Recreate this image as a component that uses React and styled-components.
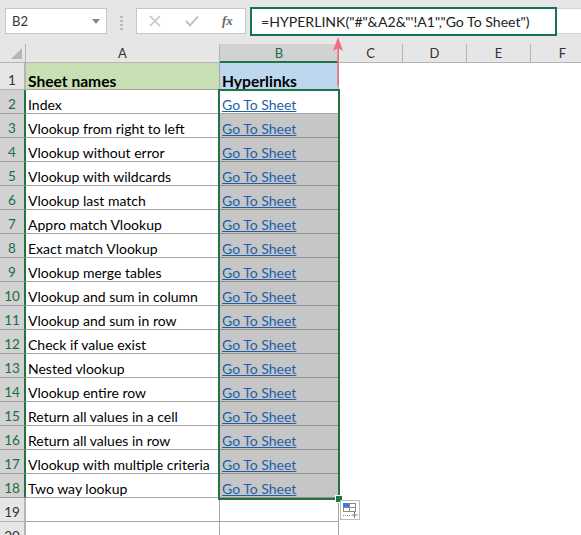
import React from 'react'
import styled, { createGlobalStyle } from 'styled-components'

const GlobalStyle = createGlobalStyle`
  html, body {
    margin: 0;
    padding: 0;
    background: #ffffff;
    overflow: hidden;
  }
`
const Sheet = styled.div`
  position: relative;
  width: 581px;
  height: 535px;
  overflow: hidden;
  font-family: Lato, "Liberation Sans", sans-serif;
  color: #000000;
`
const FormulaBar = styled.div`
  display: flex;
  align-items: flex-start;
  height: 44px;
  box-sizing: border-box;
  padding: 8px 0 0 5px;
  background: #e6e6e6;
`
const NameBox = styled.div`
  display: flex;
  align-items: center;
  justify-content: space-between;
  flex-shrink: 0;
  box-sizing: border-box;
  width: 102px;
  height: 26px;
  padding: 0 6px;
  background: #ffffff;
  border: 1px solid #c6c6c6;
  font-size: 13px;
  color: #333333;
`
const Caret = styled.span`
  width: 0;
  height: 0;
  border-left: 4px solid transparent;
  border-right: 4px solid transparent;
  border-top: 5px solid #8a8a8a;
`
const Dots = styled.div`
  display: flex;
  flex-direction: column;
  flex-shrink: 0;
  gap: 2px;
  width: 3px;
  margin: 8px 13px 0 13px;
  span {
    width: 3px;
    height: 2px;
    background: #b8b8b8;
  }
`
const FxBox = styled.div`
  display: flex;
  align-items: center;
  flex-shrink: 0;
  box-sizing: border-box;
  width: 110px;
  height: 26px;
  padding: 0 12px;
  gap: 24px;
  background: #ffffff;
  border: 1px solid #c6c6c6;
`
const FxLabel = styled.span`
  margin-left: -1px;
  font-family: "Liberation Serif", serif;
  font-style: italic;
  font-weight: bold;
  font-size: 13px;
  color: #666666;
`
const FormulaInput = styled.div`
  display: flex;
  align-items: center;
  flex-shrink: 0;
  box-sizing: border-box;
  width: 307px;
  height: 29px;
  margin: -1px 0 0 4px;
  padding-left: 9px;
  background: #ffffff;
  border: 2px solid #14705f;
  font-size: 14.1px;
  white-space: nowrap;
  color: #222222;
`
const FormulaRest = styled.div`
  flex: 1;
  height: 26px;
  box-sizing: border-box;
  background: #ffffff;
  border-top: 1px solid #d4d4d4;
  border-bottom: 1px solid #d4d4d4;
`
const Row = styled.div`
  display: flex;
  height: ${p => p.$height || 24}px;
`
const Corner = styled.div`
  position: relative;
  flex-shrink: 0;
  box-sizing: border-box;
  width: 26px;
  background: #e6e6e6;
  border-right: 1px solid #b4b4b4;
  border-bottom: 1px solid #b4b4b4;
  &::after {
    content: "";
    position: absolute;
    right: 3px;
    bottom: 3px;
    border-left: 11px solid transparent;
    border-bottom: 11px solid #b5b5b5;
  }
`
const ColumnHead = styled.div`
  display: flex;
  align-items: center;
  justify-content: center;
  flex-shrink: 0;
  box-sizing: border-box;
  width: ${p => p.$width}px;
  font-size: 13px;
  color: ${p => (p.$active ? '#1f6a45' : '#333333')};
  background: ${p => (p.$active ? '#d2d2d2' : '#e6e6e6')};
  border-right: 1px solid ${p => (p.$active ? '#9e9e9e' : '#b4b4b4')};
  border-bottom: ${p => (p.$active ? '2px solid #217346' : '1px solid #b4b4b4')};
`
const RowHead = styled.div`
  display: flex;
  align-items: flex-end;
  justify-content: center;
  flex-shrink: 0;
  box-sizing: border-box;
  width: 26px;
  padding-bottom: 1px;
  font-size: 13.5px;
  color: ${p => (p.$active ? '#1f6a45' : '#333333')};
  background: ${p => (p.$active ? '#d2d2d2' : '#e6e6e6')};
  border-bottom: 1px solid ${p => (p.$active ? '#9e9e9e' : '#b4b4b4')};
  border-right: 2px solid ${p => (p.$active ? '#217346' : '#b4b4b4')};
`
const Cell = styled.div`
  display: flex;
  align-items: flex-end;
  flex-shrink: 0;
  box-sizing: border-box;
  width: ${p => p.$width}px;
  padding-left: 2px;
  font-size: ${p => (p.$bold ? 15.6 : 14)}px;
  line-height: 16px;
  white-space: nowrap;
  overflow: ${p => (p.$clip ? 'hidden' : 'visible')};
  font-weight: ${p => (p.$bold ? 'bold' : 'normal')};
  background: ${p => p.$bg || '#ffffff'};
  border-right: 1px solid ${p => p.$line || '#a6a6a6'};
  border-bottom: 1px solid ${p => p.$line || '#a6a6a6'};
`
const SheetLink = styled.span`
  color: #1f5fa8;
  text-decoration: underline;
  font-size: 14px;
`
const Selection = styled.div`
  position: absolute;
  left: 218px;
  top: 89px;
  width: 122px;
  height: 411px;
  box-sizing: border-box;
  border: 2px solid #217346;
`
const FillHandle = styled.div`
  position: absolute;
  left: 335px;
  top: 495px;
  width: 6px;
  height: 6px;
  background: #217346;
  border: 1px solid #ffffff;
`
const PasteOptions = styled.svg`
  position: absolute;
  left: 340px;
  top: 500px;
`
const Arrow = styled.svg`
  position: absolute;
  left: 332px;
  top: 34px;
`

const names = [
  'Index', 'Vlookup from right to left', 'Vlookup without error', 'Vlookup with wildcards',
  'Vlookup last match', 'Appro match Vlookup', 'Exact match Vlookup', 'Vlookup merge tables',
  'Vlookup and sum in column', 'Vlookup and sum in row', 'Check if value exist', 'Nested vlookup',
  'Vlookup entire row', 'Return all values in a cell', 'Return all values in row',
  'Vlookup with multiple criteria', 'Two way lookup',
]
const widths = { A: 194, B: 119, C: 64, D: 64, E: 64, F: 64 }
const restCols = ['C', 'D', 'E', 'F']

const RestCells = () => restCols.map(c => <Cell key={c} $width={widths[c]} $line="#ffffff" />)

export default function App() {
  return (
    <Sheet>
      <GlobalStyle />
      <FormulaBar>
        <NameBox>B2<Caret /></NameBox>
        <Dots><span /><span /><span /><span /></Dots>
        <FxBox>
          <svg width="12" height="12" viewBox="0 0 12 12">
            <path d="M1 1 L11 11 M11 1 L1 11" stroke="#c4c4c4" strokeWidth="1.6" fill="none" />
          </svg>
          <svg width="14" height="12" viewBox="0 0 14 12">
            <path d="M1 6 L5 10.5 L13 1.5" stroke="#c4c4c4" strokeWidth="2" fill="none" />
          </svg>
          <FxLabel>fx</FxLabel>
        </FxBox>
        <FormulaInput>=HYPERLINK("#"&amp;A2&amp;"'!A1","Go To Sheet")</FormulaInput>
        <FormulaRest />
      </FormulaBar>

      <Row $height={19}>
        <Corner />
        <ColumnHead $width={widths.A}>A</ColumnHead>
        <ColumnHead $width={widths.B} $active>B</ColumnHead>
        {restCols.map(c => <ColumnHead key={c} $width={widths[c]}>{c}</ColumnHead>)}
      </Row>

      <Row $height={27}>
        <RowHead>1</RowHead>
        <Cell $width={widths.A} $bg="#c6e0b4" $bold>Sheet names</Cell>
        <Cell $width={widths.B} $bg="#bdd7ee" $bold>Hyperlinks</Cell>
        <RestCells />
      </Row>

      {names.map((name, i) => (
        <Row key={name}>
          <RowHead $active>{i + 2}</RowHead>
          <Cell $width={widths.A} $clip>{name}</Cell>
          <Cell $width={widths.B} $bg={i === 0 ? '#ffffff' : '#c6c6c6'} $line={i === 0 ? '#a6a6a6' : '#8e8e8e'}>
            <SheetLink>Go To Sheet</SheetLink>
          </Cell>
          <RestCells />
        </Row>
      ))}

      {[19, 20].map(n => (
        <Row key={n}>
          <RowHead>{n}</RowHead>
          <Cell $width={widths.A} />
          <Cell $width={widths.B} />
          <RestCells />
        </Row>
      ))}

      <Selection />
      <FillHandle />
      <PasteOptions width="20" height="20" viewBox="0 0 20 20">
        <rect x="0.5" y="0.5" width="19" height="19" fill="#ffffff" stroke="#bdbdbd" />
        <rect x="3.5" y="3.5" width="12" height="8" fill="#ffffff" stroke="#8a8a8a" />
        <rect x="3" y="3" width="6" height="4" fill="#3b78e7" />
        <path d="M9.5 3.5 V11.5 M3.5 7.5 H15.5" stroke="#8a8a8a" fill="none" />
        <path d="M3 15.5 H10" stroke="#8a8a8a" strokeDasharray="1 1" fill="none" />
        <path d="M14.5 12 V18 M11.5 15 H17.5" stroke="#7a7a7a" fill="none" />
      </PasteOptions>
      <Arrow width="12" height="54" viewBox="0 0 12 54">
        <path d="M6 6 V52" stroke="#ee6e82" strokeWidth="1.6" fill="none" />
        <path d="M1 17 L6 3 L11 17 L6 14 Z" fill="#ee6e82" />
      </Arrow>
    </Sheet>
  )
}
